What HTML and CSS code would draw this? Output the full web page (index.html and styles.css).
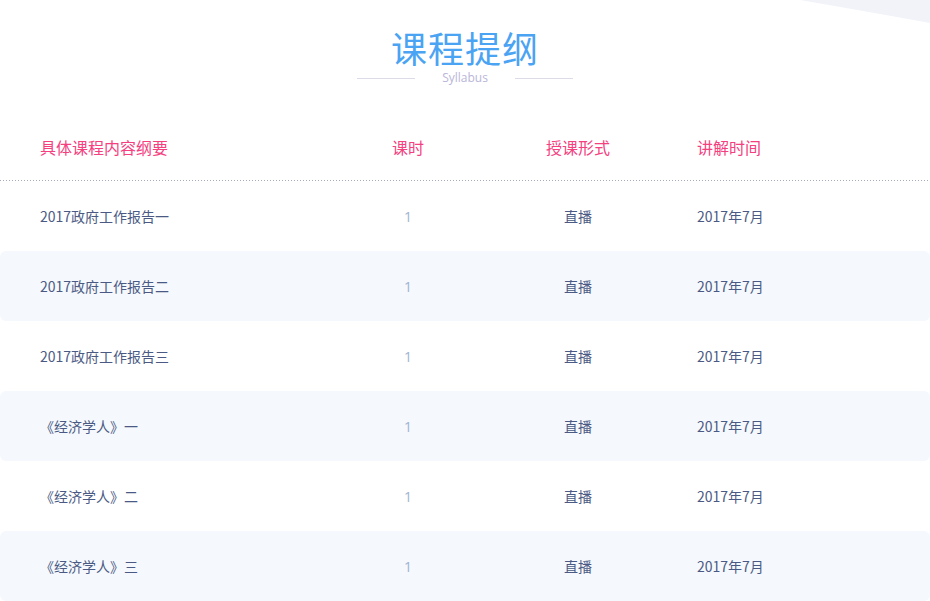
FILE: index.html
```html
<!DOCTYPE html>
<html lang="zh">
<head>
<meta charset="utf-8">
<link rel="stylesheet" href="styles.css">
</head>
<body>
<div class="page">
  <svg class="corner" width="130" height="24" viewBox="0 0 130 24"><path d="M0 0 Q70 12 130 23 L130 0 Z" fill="#f1f3f8"/></svg>
  <div class="title-block">
    <h1 class="title">课程提纲</h1>
    <div class="subtitle"><span class="line"></span><span class="sub">Syllabus</span><span class="line"></span></div>
  </div>
  <div class="table">
    <div class="row head">
      <div class="c1">具体课程内容纲要</div><div class="c2">课时</div><div class="c3">授课形式</div><div class="c4">讲解时间</div>
    </div>
    <div class="row"><div class="c1">2017政府工作报告一</div><div class="c2 num">1</div><div class="c3">直播</div><div class="c4">2017年7月</div></div>
    <div class="row alt"><div class="c1">2017政府工作报告二</div><div class="c2 num">1</div><div class="c3">直播</div><div class="c4">2017年7月</div></div>
    <div class="row"><div class="c1">2017政府工作报告三</div><div class="c2 num">1</div><div class="c3">直播</div><div class="c4">2017年7月</div></div>
    <div class="row alt"><div class="c1">《经济学人》一</div><div class="c2 num">1</div><div class="c3">直播</div><div class="c4">2017年7月</div></div>
    <div class="row"><div class="c1">《经济学人》二</div><div class="c2 num">1</div><div class="c3">直播</div><div class="c4">2017年7月</div></div>
    <div class="row alt"><div class="c1">《经济学人》三</div><div class="c2 num">1</div><div class="c3">直播</div><div class="c4">2017年7月</div></div>
  </div>
</div>
</body>
</html>
```
FILE: styles.css
```css
* { box-sizing: border-box; }
html, body { margin: 0; padding: 0; background: #fff; }
body { font-family: "Noto Sans CJK SC", "Noto Sans", sans-serif; }
.page { position: relative; width: 930px; height: 601px; overflow: hidden; }
.corner { position: absolute; top: 0; right: 0; }
.title-block { height: 120px; display: flex; flex-direction: column; align-items: center; padding-top: 27px; }
.title { margin: 0; font-size: 36px; font-weight: 400; line-height: 40px; color: #4aa3f3; letter-spacing: 1px; }
.subtitle { display: flex; align-items: center; gap: 27px; margin-top: 4px; }
.line { width: 58px; height: 1px; background: #dcdce8; }
.sub { font-family: "Open Sans", "Liberation Sans", sans-serif; font-size: 12px; color: #b9b6d8; line-height: 14px; }
.table { display: flex; flex-direction: column; }
.row { display: grid; grid-template-columns: 340px 136px 204px 1fr; height: 70px; align-items: center; font-size: 14px; color: #4b5a84; border-radius: 6px; }
.row.head { height: 61px; padding-bottom: 8px; color: #f4407f; font-size: 16px; border-radius: 0; background-image: linear-gradient(to right, #a4acbc 1px, transparent 1px); background-size: 3px 1px; background-repeat: repeat-x; background-position: 0 100%; }
.row.alt { background: #f5f8fc; }
.c1 { padding-left: 40px; }
.c2, .c3 { text-align: center; }
.c4 { padding-left: 17px; }
.num { color: #9fb3d3; font-family: "Open Sans", "Liberation Sans", sans-serif; }
```
